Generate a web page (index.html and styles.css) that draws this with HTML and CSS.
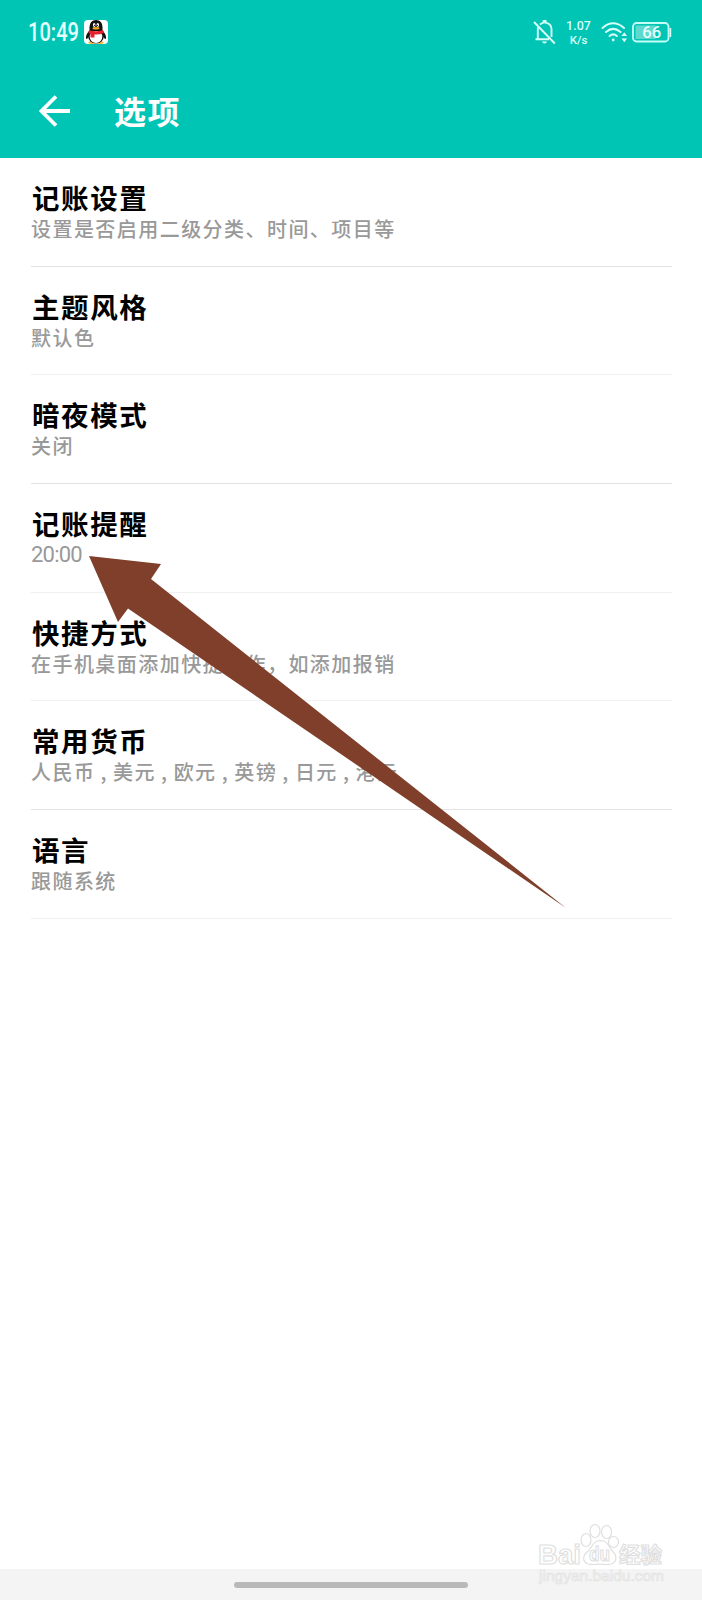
FILE: index.html
```html
<!DOCTYPE html>
<html lang="zh-CN">
<head>
<meta charset="utf-8">
<title>选项</title>
<link rel="stylesheet" href="styles.css">
</head>
<body>
<div class="screen">
  <header class="header">
    <div class="status">
      <svg class="clock" width="54" height="34"><text x="0" y="25.500" textLength="51" lengthAdjust="spacingAndGlyphs">10:49</text></svg>
      <svg class="qq" width="24" height="24" viewBox="0 0 24 24">
        <rect width="24" height="24" rx="4" fill="#fff"/>
        <ellipse cx="8" cy="22.6" rx="3.6" ry="1.4" fill="#f2b234"/><ellipse cx="16" cy="22.6" rx="3.6" ry="1.4" fill="#f2b234"/>
        <path d="M5 11Q1.500 15 2 18.500Q3 20 5 16.500L19 16.500Q21 20 22 18.500Q22.500 15 19 11Z" fill="#111"/>
        <ellipse cx="12" cy="15.500" rx="8" ry="8" fill="#111"/>
        <ellipse cx="12" cy="16.800" rx="6.300" ry="6.200" fill="#fff"/>
        <path d="M5.500 11V7Q6 0 12 0T18.500 7V11Z" fill="#111"/>
        <ellipse cx="10.200" cy="5" rx="1.300" ry="1.900" fill="#fff"/><ellipse cx="13.800" cy="5" rx="1.300" ry="1.900" fill="#fff"/>
        <circle cx="10.500" cy="5.300" r=".6"/><circle cx="13.500" cy="5.300" r=".6"/>
        <ellipse cx="12" cy="8.200" rx="3.600" ry="1.300" fill="#f5a81c"/>
        <path d="M5 10Q12 12.500 19 10L20 13Q15 15 10.500 14.500V17.500H6.500V14L4.500 13Z" fill="#e5202c"/>
      </svg>
      <div class="status-icons">
        <svg width="24" height="26" viewBox="0 0 24 26" fill="none" stroke="#d8fffa" stroke-width="1.900">
          <path d="M7 4.500Q9 2.800 10.600 2.600V1H12.600V2.600Q18.500 4 18.500 9V17M2.500 19.200H16M4.800 19V9Q4.800 8 5.200 7.200M1 2 21.800 23.500"/>
          <path d="M9 21.500H14Q13.500 23.500 11.500 23.500T9 21.500Z" fill="#d8fffa" stroke="none"/>
        </svg>
        <div class="speed"><span>1.07</span><span class="unit">K/s</span></div>
        <svg width="27" height="24" viewBox="0 0 27 24" fill="none" stroke="#d8fffa" stroke-width="2" stroke-linecap="round">
          <path d="M1.500 7Q12 -2.500 23 7M5 11Q12.200 4.800 19.500 11M8.600 15Q12.200 11.800 15.800 15"/>
          <circle cx="12.200" cy="19" r="1.400" fill="#d8fffa" stroke="none"/>
          <path d="M20.500 15 23.300 11.200 26.100 15ZM20.500 17.400H26.100L23.300 21.200Z" fill="#d8fffa" stroke="none"/>
        </svg>
        <svg class="battery" width="41" height="22" viewBox="0 0 41 22">
          <rect x="3.500" y="3.500" width="20" height="13.500" fill="#5fd9ce"/>
          <rect x="1" y="1" width="35.500" height="18.500" rx="3.500" fill="none" stroke="#c4fff8" stroke-width="1.800"/>
          <path d="M37.500 6H39.200V15H37.500Z" fill="#d8fffa"/>
          <text x="10.200" y="16.300" textLength="19" lengthAdjust="spacingAndGlyphs">66</text>
        </svg>
      </div>
    </div>
    <div class="toolbar">
      <svg width="32" height="32" viewBox="0 0 32 32" fill="none" stroke="#fff" stroke-width="3.800"><path d="M31 16H2.500M17 1.500 2.500 16 17 30.500"/></svg>
      <h1>选项</h1>
    </div>
  </header>
  <main class="list">
    <section class="row"><h2>记账设置</h2><p>设置是否启用二级分类、时间、项目等</p></section>
    <section class="row light"><h2>主题风格</h2><p>默认色</p></section>
    <section class="row"><h2>暗夜模式</h2><p>关闭</p></section>
    <section class="row light"><h2>记账提醒</h2><p class="time">20:00</p></section>
    <section class="row light"><h2>快捷方式</h2><p>在手机桌面添加快捷操作，如添加报销</p></section>
    <section class="row"><h2>常用货币</h2><p class="currencies">人民币 , 美元 , 欧元 , 英镑 , 日元 , 港元</p></section>
    <section class="row light"><h2>语言</h2><p>跟随系统</p></section>
  </main>
  <footer class="navbar"><div class="handle"></div></footer>
  <svg class="pointer" width="478" height="353" viewBox="89 556 478 353"><path d="M89 556 161 564 151 579 566 908 128 608.500 118 622Z" fill="#7f3f2b"/></svg>
  <svg class="watermark" width="134" height="68" viewBox="0 0 134 68">
    <g fill="#fff" stroke="#dfdfdf" stroke-width="1.200">
      <text class="brand" x="4" y="44" textLength="43" lengthAdjust="spacingAndGlyphs">Bai</text>
      <ellipse cx="52" cy="20" rx="5" ry="6.500"/><ellipse cx="61" cy="11" rx="5" ry="6.500"/><ellipse cx="72.500" cy="12" rx="5" ry="6.500"/><ellipse cx="79.500" cy="22" rx="5" ry="5.500"/>
      <path d="M66 20.500Q72 20.500 75 26T81 34Q84 42 77 44Q73 45 66 44Q58 45 54 44Q47 41 51 34Q55 31 58 26T66 20.500Z"/>
      <text class="du" x="55" y="40.500" textLength="21" lengthAdjust="spacingAndGlyphs">du</text>
      <text class="cn" x="85" y="42" textLength="43" lengthAdjust="spacingAndGlyphs">经验</text>
    </g>
    <text class="url" x="5" y="60.500" textLength="125" lengthAdjust="spacingAndGlyphs">jingyan.baidu.com</text>
  </svg>
</div>
</body>
</html>
```
FILE: styles.css
```css
* { box-sizing: border-box; }
body { margin: 0; font-family: Roboto, "Noto Sans CJK SC", sans-serif; }
h1, h2, p { margin: 0; }
svg { display: block; flex: none; }
.screen { position: relative; width: 702px; height: 1600px; display: flex; flex-direction: column; background: #fff; overflow: hidden; }
.header { height: 158px; flex: none; background: #00c5b5; color: #fff; }
.status { display: flex; align-items: center; height: 64px; padding: 0 29px 0 28px; }
.clock text { font-size: 25px; font-weight: 500; fill: #e4fffc; }
.qq { margin-left: 2px; }
.status-icons { display: flex; align-items: center; margin-left: auto; padding-top: 2px; }
.speed { width: 25px; margin: 0 10px 0 9px; display: flex; flex-direction: column; align-items: center; font-size: 12.500px; line-height: 14px; font-weight: 500; color: #d8fffa; }
.unit { font-size: 11.500px; }
.battery { margin-left: 4px; }
.battery text { font-size: 17px; font-weight: 500; fill: #e4fffc; }
.toolbar { display: flex; align-items: center; height: 94px; padding-left: 39px; gap: 43px; }
.toolbar h1 { font: 700 32px/48px "Noto Sans CJK SC", sans-serif; letter-spacing: 1.500px; padding-bottom: 3px; }
.list { flex: 1; padding: 0 30px 0 31px; }
.row { height: 108.700px; padding-top: 24px; border-bottom: 1px solid #e2e2e2; }
.row.light { border-color: #f0f0f0; }
.row h2 { font: 700 27.500px/30px "Noto Sans CJK SC", sans-serif; letter-spacing: 1.600px; padding-left: 1px; color: #000; }
.row p { font: 500 20px/30px "Noto Sans CJK SC", sans-serif; letter-spacing: 1.450px; margin-top: 2px; color: #999; white-space: nowrap; }
.row .time { font: 400 22px/30px Roboto, sans-serif; letter-spacing: -.800px; }
.row .currencies { word-spacing: -.800px; }
.navbar { height: 31px; background: #f4f4f4; padding-top: 13px; }
.handle { width: 234px; height: 6px; margin: 0 auto; border-radius: 3px; background: #b9b9b9; }
.pointer { position: absolute; left: 89px; top: 556px; }
.watermark { position: absolute; left: 534px; top: 1520px; }
.brand { font: 700 28px "Liberation Sans", sans-serif; }
.du { font: 700 20px "Liberation Sans", sans-serif; }
.cn { font: 700 21px "Noto Sans CJK SC", sans-serif; }
.url { font: 400 15px "Liberation Sans", sans-serif; fill: #f8f8f8; stroke: #e2e2e2; stroke-width: .7px; }
```
